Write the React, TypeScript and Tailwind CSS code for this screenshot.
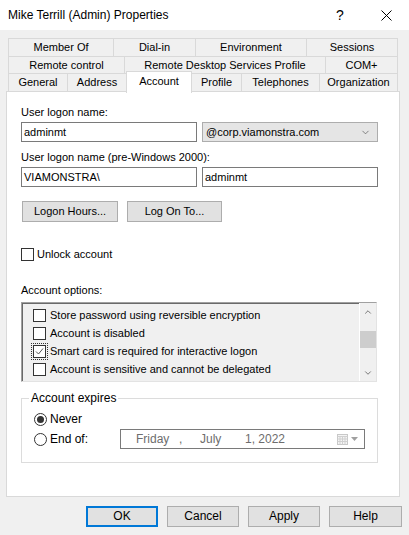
import { ChevronDown, ChevronUp } from 'lucide-react'

function Tab({ label, w, last, noLeft }: { label: string; w: number; last?: boolean; noLeft?: boolean }) {
  return (
    <div
      className={`flex items-center justify-center border-[#d9d9d9] bg-[#f0f0f0] ${noLeft ? '' : 'border-l'} ${last ? 'border-r' : ''}`}
      style={{ width: w }}
    >
      {label}
    </div>
  )
}

function Check({ checked }: { checked?: boolean }) {
  return (
    <span className="flex h-[13px] w-[13px] shrink-0 items-center justify-center border border-[#333333] bg-white">
      {checked && (
        <svg width="9" height="9" viewBox="0 0 9 9">
          <path d="M1 4.5 L3.5 7 L8 1.5" fill="none" stroke="#555" strokeWidth="1" />
        </svg>
      )}
    </span>
  )
}

function Radio({ checked }: { checked?: boolean }) {
  return (
    <span className="flex h-[13px] w-[13px] shrink-0 items-center justify-center rounded-full border border-[#333333] bg-white">
      {checked && <span className="h-[7px] w-[7px] rounded-full bg-[#333333]" />}
    </span>
  )
}

function Btn({ label, primary, w }: { label: string; primary?: boolean; w: number }) {
  return (
    <div
      className={`flex h-[21px] items-center justify-center bg-[#e1e1e1] ${primary ? 'border-2 border-[#0078d7]' : 'border border-[#adadad]'}`}
      style={{ width: w }}
    >
      {label}
    </div>
  )
}

export default function App() {
  const options = [
    { label: 'Store password using reversible encryption' },
    { label: 'Account is disabled' },
    { label: 'Smart card is required for interactive logon', checked: true },
    { label: 'Account is sensitive and cannot be delegated' },
  ]

  return (
    <div className="h-[535px] w-[409px] overflow-hidden bg-[#f0f0f0] font-['Liberation_Sans',Arial,sans-serif] text-[11px] leading-[15px] text-black">
      {/* title bar */}
      <div className="flex h-[30px] items-center bg-white pl-[8px]">
        <span className="flex-1 text-[12px]">Mike Terrill (Admin) Properties</span>
        <span className="w-[46px] text-center text-[14px]">?</span>
        <span className="flex w-[46px] justify-center">
          <svg width="11" height="11" viewBox="0 0 11 11">
            <path d="M0.5 0.5 L10.5 10.5 M10.5 0.5 L0.5 10.5" stroke="#000" strokeWidth="1" />
          </svg>
        </span>
      </div>

      {/* tabs */}
      <div className="ml-[8px] mt-[8px] w-[390px]">
        <div className="flex h-[18px] border-t border-[#d9d9d9]">
          <Tab label="Member Of" w={105} />
          <Tab label="Dial-in" w={82} />
          <Tab label="Environment" w={111} />
          <Tab label="Sessions" w={92} last />
        </div>
        <div className="flex h-[17px] border-t border-[#d9d9d9]">
          <Tab label="Remote control" w={116} />
          <Tab label="Remote Desktop Services Profile" w={201} />
          <Tab label="COM+" w={73} last />
        </div>
        <div className="flex h-[18px] border-t border-[#d9d9d9]">
          <Tab label="General" w={59} />
          <Tab label="Address" w={59} />
          <div className="relative z-10 mt-[-3px] flex h-[22px] w-[66px] items-center justify-center border-x border-t border-[#d9d9d9] bg-white pb-[3px]">
            Account
          </div>
          <Tab label="Profile" w={49} noLeft />
          <Tab label="Telephones" w={78} />
          <Tab label="Organization" w={79} last />
        </div>
      </div>

      {/* panel */}
      <div className="ml-[6px] h-[406px] w-[394px] border border-[#d9d9d9] bg-white pl-[14px]">
        <div className="pt-[13px]">User logon name:</div>
        <div className="mt-[2px] flex gap-[5px]">
          <div className="flex h-[20px] w-[176px] items-center border border-[#7a7a7a] px-[2px]">adminmt</div>
          <div className="flex h-[20px] w-[176px] items-center justify-between border border-[#adadad] bg-[#e5e5e5] pl-[3px] pr-[6px]">
            <span>@corp.viamonstra.com</span>
            <ChevronDown size={11} strokeWidth={1.5} color="#555" />
          </div>
        </div>
        <div className="mt-[8px]">User logon name (pre-Windows 2000):</div>
        <div className="mt-[2px] flex gap-[5px]">
          <div className="flex h-[20px] w-[176px] items-center border border-[#7a7a7a] px-[2px]">VIAMONSTRA\</div>
          <div className="flex h-[20px] w-[176px] items-center border border-[#7a7a7a] px-[2px]">adminmt</div>
        </div>
        <div className="mt-[14px] flex gap-[9px] pl-[1px]">
          <Btn label="Logon Hours..." w={96} />
          <Btn label="Log On To..." w={95} />
        </div>
        <div className="mt-[26px] flex h-[13px] items-center gap-[3px]">
          <Check />
          <span>Unlock account</span>
        </div>
        <div className="mt-[22px]">Account options:</div>

        {/* account options list */}
        <div className="mt-[4px] flex h-[80px] w-[356px] border border-[#a0a0a0] border-b-[#e3e3e3] border-r-[#e3e3e3] bg-[#f0f0f0] shadow-[inset_1px_1px_0_#696969]">
          <div className="flex-1 pl-[9px] pt-[3px]">
            {options.map((o) => (
              <div key={o.label} className="flex h-[18px] items-center gap-[2px]">
                <span
                  className={`flex h-[17px] w-[17px] items-center justify-center ${o.checked ? 'outline outline-1 outline-dotted outline-[#333] -outline-offset-1' : ''}`}
                >
                  <Check checked={o.checked} />
                </span>
                <span>{o.label}</span>
              </div>
            ))}
          </div>
          <div className="flex w-[17px] flex-col items-center border-l border-white bg-[#f0f0f0]">
            <div className="flex h-[17px] w-full items-center justify-center">
              <ChevronUp size={10} strokeWidth={2} color="#606060" />
            </div>
            <div className="mt-[11px] h-[17px] w-full bg-[#cdcdcd]" />
            <div className="flex-1" />
            <div className="flex h-[17px] w-full items-center justify-center">
              <ChevronDown size={10} strokeWidth={2} color="#606060" />
            </div>
          </div>
        </div>

        {/* account expires */}
        <fieldset className="mt-[9px] h-[72px] w-[357px] border border-[#dcdcdc] pl-[12px]">
          <legend className="ml-[-5px] px-[2px] text-[12px]">Account expires</legend>
          <div className="mt-[7px] flex h-[13px] items-center gap-[3px]">
            <Radio checked />
            <span className="text-[12px]">Never</span>
          </div>
          <div className="mt-[3px] flex items-center">
            <div className="flex w-[86px] items-center gap-[3px]">
              <Radio />
              <span className="text-[12px]">End of:</span>
            </div>
            <div className="flex h-[20px] w-[245px] items-center border border-[#7a7a7a] text-[12px] text-[#6d6d6d]">
              <span className="ml-[15px] w-[43px]">Friday</span>
              <span className="w-[21px]">,</span>
              <span className="w-[45px]">July</span>
              <span>1, 2022</span>
              <span className="ml-auto mr-[6px] flex items-center gap-[3px]">
                <svg width="11" height="11" viewBox="0 0 11 11">
                  <rect x="0.5" y="0.5" width="10" height="10" fill="#f4f4f4" stroke="#c8c8c8" />
                  <path d="M0.5 2.5 H10.5 M3 2.5 V10.5 M5.5 2.5 V10.5 M8 2.5 V10.5 M0.5 5 H10.5 M0.5 7.5 H10.5" stroke="#d0d0d0" strokeWidth="1" />
                </svg>
                <svg width="7" height="4" viewBox="0 0 7 4">
                  <path d="M0 0 H7 L3.5 4 Z" fill="#a0a0a0" />
                </svg>
              </span>
            </div>
          </div>
        </fieldset>
      </div>

      {/* dialog buttons */}
      <div className="mt-[9px] flex justify-end gap-[9px] pr-[7px] text-[12px]">
        <Btn label="OK" w={72} primary />
        <Btn label="Cancel" w={72} />
        <Btn label="Apply" w={72} />
        <Btn label="Help" w={73} />
      </div>
    </div>
  )
}
